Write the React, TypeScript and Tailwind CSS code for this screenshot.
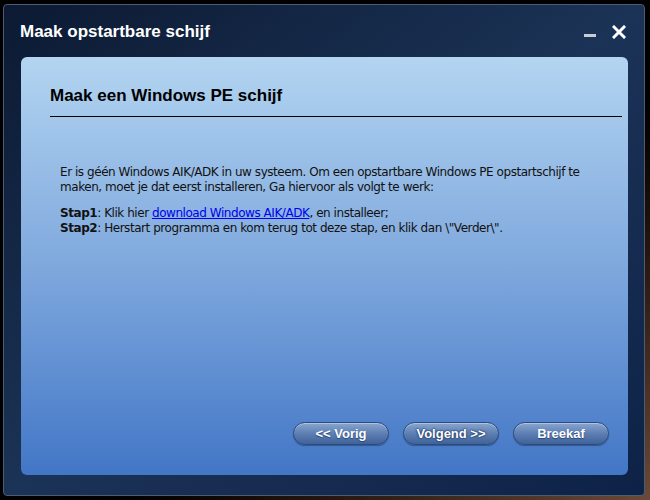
import React from 'react';

const font = { fontFamily: 'Tahoma, "DejaVu Sans", "Liberation Sans", sans-serif' };

const Button: React.FC<{ label: string; strong?: boolean }> = ({ label, strong }) => (
  <button
    className={
      'w-[96px] h-[23px] rounded-full border border-[#2c4a7c] bg-gradient-to-b from-[#8aa6d0] via-[#5d7fb3] to-[#3f6299] text-white text-[13px] font-bold leading-none font-[\'Liberation_Sans\',sans-serif] shadow-[inset_0_1px_0_rgba(255,255,255,0.35),0_1px_1px_rgba(0,0,0,0.3)] ' +
      (strong ? '[text-shadow:0_0_2px_#1c3460,0_0_2px_#1c3460]' : '[text-shadow:0_1px_1px_#2a4676]')
    }
  >
    {label}
  </button>
);

export default function App() {
  return (
    <div
      className="w-[650px] h-[500px] overflow-hidden bg-gradient-to-br from-black via-black to-[#6b4a38] pl-[3px] pt-[4px]"
      style={font}
    >
      <div className="w-[642px] h-[492px] rounded-[4px] border border-[#4c5c74] bg-gradient-to-br from-[#0c1a33] via-[#1b3356] to-[#0e2248] flex flex-col">
        {/* Title bar */}
        <div className="h-[52px] flex items-start justify-between pl-[16px] pr-[18px] pt-[17px]">
          <span className="text-white font-bold text-[17px] leading-[20px] font-['Liberation_Sans',sans-serif]">
            Maak opstartbare schijf
          </span>
          <div className="flex items-center gap-[16px] pt-[3px]">
            <div className="w-[12px] h-[3px] bg-[#c8ccd4] mt-[6px]" />
            <svg width="14" height="14" viewBox="0 0 14 14">
              <path d="M2 2 L12 12 M12 2 L2 12" stroke="white" strokeWidth="3" strokeLinecap="square" />
            </svg>
          </div>
        </div>

        {/* Content panel */}
        <div className="ml-[17px] mr-[16px] h-[418px] rounded-[6px] bg-gradient-to-b from-[#b3d5f1] via-[#7fa8dd] to-[#4276c6] flex flex-col px-[29px] pt-[28px]">
          <h1 className="text-black font-bold text-[17px] leading-[22px] font-['Liberation_Sans',sans-serif]">
            Maak een Windows PE schijf
          </h1>
          <div className="h-px bg-black mt-[9px] w-[572px]" />

          <div className="mt-[48px] pl-[10px] text-[12px] leading-[15px] text-[#111] whitespace-nowrap font-['DejaVu_Sans',sans-serif] tracking-[-0.45px]">
            <p>Er is géén Windows AIK/ADK in uw systeem. Om een opstartbare Windows PE opstartschijf te</p>
            <p>maken, moet je dat eerst installeren, Ga hiervoor als volgt te werk:</p>
            <p className="mt-[11px]">
              <b>Stap1</b>: Klik hier{' '}
              <a className="text-[#0000ee] underline">download Windows AIK/ADK</a>, en installeer;
            </p>
            <p>
              <b>Stap2</b>: Herstart programma en kom terug tot deze stap, en klik dan \"Verder\".
            </p>
          </div>

          <div className="mt-auto mb-[30px] flex justify-end gap-[14px] -mr-[10px]">
            <Button label="<< Vorig" />
            <Button label="Volgend >>" strong />
            <Button label="Breekaf" />
          </div>
        </div>
      </div>
    </div>
  );
}
